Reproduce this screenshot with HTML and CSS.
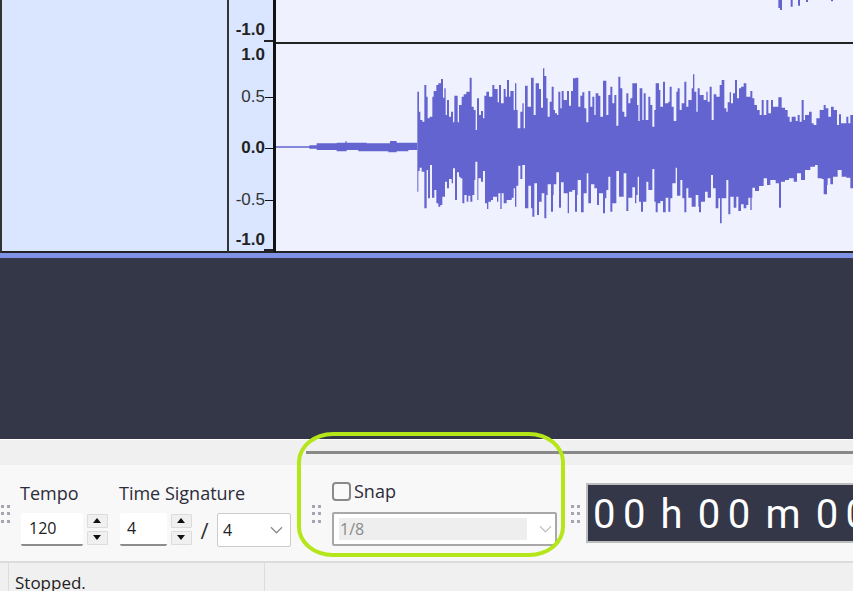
FILE: index.html
```html
<!DOCTYPE html>
<html lang="en">
<head>
  <meta charset="UTF-8" />
  <title>Snap toolbar</title>
  <link rel="stylesheet" href="styles.css">
</head>
<body>
  <div class="tracks">
    <div class="panel"></div>

    <div class="ruler">
      <div class="ruler-top"><span class="scale bold">-1.0</span></div>
      <div class="ruler-scale">
        <span class="scale bold">1.0</span>
        <span class="scale tick">0.5</span>
        <span class="scale bold tick">0.0</span>
        <span class="scale tick">-0.5</span>
        <span class="scale bold">-1.0</span>
      </div>
    </div>

    <div class="lanes">
      <div class="lane-top"></div>
      <div class="lane-bottom"></div>
    </div>

    <!-- waveform, coordinates are 3x screen pixels -->
    <svg class="wave" viewBox="0 0 2559 774">
      <g fill="#6464d0">
        <!-- quiet intro -->
        <path d="M828 439H928V436H950V430H1010V428H1036V424H1040V428H1100V430H1170V423H1190V428H1252V441H828Z" />
        <path d="M828 443H928V446H950V450H1010V454H1040V450H1075V454H1165V457H1190V454H1225V450H1252V441H828Z" />
        <!-- solid core -->
        <path d="M1252 405H2559V465H1252Z" />
        <!-- upper envelope -->
        <path transform="translate(1245 195)" d="M7 210V80H12V140H16V165H22V170H28V60H34V95H38V160H44V155H52V95H56V78H64V60H70V55H78V42H84V98H88V70H92V150H96V105H102V155H108V140H114V172H118V92H128V172H132V120H140V95H146V88H154V80H164V38H170V125H176V135H182V195H186V100H192V150H198V138H204V160H208V92H214V80H222V95H232V60H238V72H248V112H252V60H258V115H266V72H272V95H276V45H282V95H286V78H296V135H300V55H304V135H308V190H316V140H322V115H326V190H330V62H338V125H348V38H356V150H362V55H372V72H378V128H384V10H388V33H394V100H398V155H404V110H410V65H416V135H420V145H426V150H430V80H436V130H440V78H446V105H456V78H462V122H468V78H474V40H482V38H490V125H496V92H502V82H508V130H514V172H520V78H526V125H532V95H538V150H542V85H550V92H556V155H564V47H574V150H580V90H586V65H592V115H598V90H604V182H610V35H616V70H622V140H628V155H634V85H640V115H646V100H652V55H660V210Z" />
        <path transform="translate(1905 195)" d="M0 210V55H6V120H10V168H14V70H22V165H26V85H32V165H40V95H46V120H52V185H58V135H62V55H72V75H76V125H84V50H90V115H100V110H104V65H110V125H116V168H124V80H128V70H134V135H140V115H148V50H154V125H160V105H170V70H174V28H178V80H184V140H188V70H194V90H206V105H214V80H218V110H224V65H230V165H236V88H244V95H254V60H260V45H268V130H274V140H278V112H284V82H288V115H294V85H300V45H306V100H312V70H318V65H326V55H334V95H346V78H352V100H358V120H366V135H374V150H380V105H386V150H394V105H400V145H408V105H414V125H430V97H440V128H450V135H458V155H464V170H470V155H482V168H488V150H494V170H500V105H506V165H510V150H522V140H530V175H536V180H544V160H554V135H566V120H572V130H580V155H588V125H596V135H606V180H612V148H618V175H634V155H640V175H646V150H654V210Z" />
        <!-- lower envelope -->
        <path transform="translate(1245 465)" d="M7 0V110H10V48H14V38H20V50H28V160H35V45H39V130H45V30H51V128H58V105H64V145H70V155H76V150H82V125H90V80H96V100H102V72H110V85H114V40H120V135H126V52H132V65H136V70H142V145H148V120H155V140H160V122H166V140H172V120H178V75H181V20H187V135H190V70H198V80H204V48H210V145H216V162H220V140H228V135H234V125H246V140H250V115H256V162H260V115H266V145H275V135H290V128H296V100H300V155H304V92H310V32H316V72H322V30H330V160H340V92H348V160H352V185H358V85H366V180H372V140H380V115H388V190H394V120H398V88H408V170H414V120H416V88H424V52H432V158H438V82H446V115H458V175H462V110H472V105H480V170H486V120H488V75H498V172H506V115H515V55H520V145H528V88H538V100H546V150H552V115H564V175H570V130H574V105H580V65H586V170H592V145H604V48H612V125H626V55H634V168H640V128H652V97H660V0Z" />
        <path transform="translate(1905 465)" d="M0 0V145H4V120H8V65H12V140H18V170H24V140H34V80H40V105H52V42H58V140H62V172H68V145H76V138H84V172H92V128H100V170H106V130H112V85H122V38H126V122H136V75H142V130H148V172H154V100H160V128H170V155H182V120H190V155H192V172H198V140H210V110H218V128H228V60H234V100H242V160H250V130H255V205H260V130H274V75H280V178H286V125H296V158H304V125H310V168H318V148H326V160H334V150H340V128H346V165H350V128H352V98H360V108H372V93H386V70H396V90H406V75H422V85H432V158H438V80H450V75H462V70H476V80H486V55H498V75H510V45H526V35H540V30H548V70H560V72H566V118H576V90H578V70H586V88H594V65H608V45H620V65H634V68H646V100H654V0Z" />
        <!-- end of the clip in the track above -->
        <path transform="translate(1290)" d="M1045 0V24H1050V30H1056V0ZM1082 0V20H1088V0ZM1104 0V17H1110V0ZM1128 0V6H1134V0ZM1203 0V4H1209V0Z" />
      </g>
    </svg>
  </div>

  <div class="workspace"></div>

  <div class="rail"><div class="rail-line"></div></div>

  <div class="toolbar">
    <svg class="grip grip-first" viewBox="0 0 10 18"><path d="M1 0h3v3H1zM7 0h3v3H7zM1 7h3v3H1zM7 7h3v3H7zM1 15h3v3H1zM7 15h3v3H7z" /></svg>

    <div class="group group-tempo">
      <div class="label">Tempo</div>
      <div class="controls">
        <div class="input input-tempo">120</div>
        <div class="spin"><button class="up"></button><button class="down"></button></div>
      </div>
    </div>

    <div class="group group-sig">
      <div class="label">Time Signature</div>
      <div class="controls">
        <div class="input input-sig">4</div>
        <div class="spin"><button class="up"></button><button class="down"></button></div>
        <span class="slash">/</span>
        <div class="select select-sig">
          <span>4</span>
          <svg class="chevron" viewBox="0 0 14 8"><path d="M1 1l6 6 6-6" /></svg>
        </div>
      </div>
    </div>

    <svg class="grip grip-snap" viewBox="0 0 10 18"><path d="M1 0h3v3H1zM7 0h3v3H7zM1 7h3v3H1zM7 7h3v3H7zM1 15h3v3H1zM7 15h3v3H7z" /></svg>

    <div class="group group-snap">
      <div class="snap-row"><span class="checkbox"></span><span class="label">Snap</span></div>
      <div class="select select-snap">
        <span class="snap-value">1/8</span>
        <svg class="chevron chevron-off" viewBox="0 0 14 8"><path d="M1 1l6 6 6-6" /></svg>
      </div>
    </div>

    <svg class="grip grip-time" viewBox="0 0 10 18"><path d="M1 0h3v3H1zM7 0h3v3H7zM1 7h3v3H1zM7 7h3v3H7zM1 15h3v3H1zM7 15h3v3H7z" /></svg>

    <div class="timer">00 h 00 m 00</div>
  </div>

  <div class="status">
    <div class="status-cell">Stopped.</div>
  </div>

  <div class="highlight"></div>
</body>
</html>
```

FILE: styles.css
```css
html, body {
  margin: 0;
  height: 591px;
  overflow: hidden;
}

body {
  position: relative;
  font-family: "Open Sans", "Noto Sans", Arial, sans-serif;
  font-size: 16px;
  color: #222;
  background: #f0f0f0;
}

/* tracks */

.tracks {
  position: relative;
  display: flex;
  height: 253px;
  border-bottom: 5px solid #8092e6;
  background: #eff1ff;
}

.panel {
  width: 227px;
  box-sizing: border-box;
  background: #dae6ff;
  border-left: 2px solid #333;
  border-bottom: 2px solid #222;
}

.ruler {
  display: flex;
  flex-direction: column;
  width: 49px;
  box-sizing: border-box;
  background: #dae6ff;
  border-left: 2px solid #333;
  border-right: 3px solid #111;
  border-bottom: 2px solid #222;
  font-family: "Liberation Sans", Arial, sans-serif;
}

.ruler-top {
  position: relative;
  height: 44px;
  flex: none;
  display: flex;
  align-items: flex-end;
  justify-content: flex-end;
  padding-bottom: 4px;
  box-sizing: border-box;
}

.ruler-scale {
  position: relative;
  flex: 1;
  display: grid;
  grid-template-rows: 22px 62px 40px 64px 16px;
}

/* end ticks of each scale */
.ruler-top::after,
.ruler-scale::after {
  content: "";
  position: absolute;
  right: 0;
  width: 9px;
  height: 2px;
  background: #222;
}

.ruler-top::after {
  bottom: 2px;
}

.ruler-scale::after {
  bottom: 0;
}

.scale {
  position: relative;
  display: flex;
  align-items: center;
  justify-content: flex-end;
  padding-right: 8px;
  font-size: 17px;
  line-height: 16px;
  color: #333;
}

.ruler-top .scale {
  height: 20px;
}

.bold {
  font-weight: bold;
  color: #222;
}

.tick::after {
  content: "";
  position: absolute;
  right: 0;
  top: 50%;
  width: 8px;
  height: 1px;
  background: #111;
}

.lanes {
  flex: 1;
  display: flex;
  flex-direction: column;
}

.lane-top {
  height: 44px;
  flex: none;
  box-sizing: border-box;
  border-bottom: 2px solid #222;
}

.lane-bottom {
  flex: 1;
  border-bottom: 2px solid #222;
}

.wave {
  position: absolute;
  left: 0;
  top: 0;
  width: 853px;
  height: 258px;
}

.workspace {
  height: 181px;
  background: #333748;
}

/* toolbar */

.rail {
  height: 26px;
  box-sizing: border-box;
  padding: 11px 0 0 306px;
  border-top: 1px solid #fff;
}

.rail-line {
  height: 3px;
  background: #888;
}

.toolbar {
  display: flex;
  align-items: center;
  height: 98px;
  box-sizing: border-box;
  background: #f8f8f8;
  border-bottom: 2px solid #dcdcdc;
  overflow: hidden;
}

.grip {
  width: 10px;
  height: 18px;
  flex: none;
  fill: #a6a6b0;
  margin-top: 1px;
}

.grip-snap {
  margin-left: 19px;
  width: 12px;
}

.grip-time {
  margin-left: 13px;
}

.group {
  flex: none;
  display: flex;
  flex-direction: column;
}

.group-tempo {
  margin-left: 10px;
  width: 88px;
}

.group-sig {
  margin-left: 11px;
  width: 172px;
}

.group-snap {
  margin-left: 10px;
  width: 225px;
}

.label {
  font-size: 18px;
  line-height: 26px;
  margin-bottom: 7px;
  color: #2c2c3a;
  white-space: nowrap;
}

.controls {
  display: flex;
  align-items: center;
}

.input {
  height: 33px;
  box-sizing: border-box;
  background: #fff;
  border-bottom: 2px solid #8c8c8c;
  border-radius: 2px;
  line-height: 31px;
}

.input-tempo {
  width: 62px;
  padding-left: 8px;
  margin-left: 1px;
}

.input-sig {
  width: 47px;
  padding-left: 7px;
  margin-left: 1px;
}

.spin {
  display: flex;
  flex-direction: column;
  gap: 3px;
  margin-left: 4px;
}

.spin button {
  position: relative;
  display: block;
  width: 21px;
  height: 14px;
  padding: 0;
  background: #f0f0f0;
  border: 1px solid #dcdcdc;
  border-radius: 1px;
}

.spin button::before {
  content: "";
  position: absolute;
  left: 5px;
  top: 3px;
  border-left: 4px solid transparent;
  border-right: 4px solid transparent;
}

.spin .up::before {
  border-bottom: 5px solid #111;
}

.spin .down::before {
  border-top: 5px solid #111;
}

.slash {
  width: 25px;
  text-align: center;
  font-size: 22px;
  color: #333;
}

.select {
  display: flex;
  align-items: center;
  justify-content: space-between;
  height: 34px;
  box-sizing: border-box;
  background: #fff;
  border-radius: 2px;
}

.select-sig {
  width: 74px;
  padding: 0 6px 0 5px;
  border: 1px solid #ccc;
}

.select-snap {
  width: 225px;
  padding: 0 2px 0 5px;
  border: 2px solid #a8a8a8;
}

.snap-row {
  display: flex;
  align-items: center;
  gap: 3px;
  height: 22px;
  margin-bottom: 10px;
}

.snap-row .label {
  margin-bottom: 0;
}

.checkbox {
  width: 19px;
  height: 19px;
  box-sizing: border-box;
  border: 2px solid #8a8a8a;
  border-radius: 4px;
  background: #fafafa;
}

.snap-value {
  width: 188px;
  height: 22px;
  line-height: 22px;
  padding-left: 1px;
  box-sizing: border-box;
  background: #eee;
  color: #8a8a8a;
}

.chevron {
  width: 13px;
  height: 8px;
  margin-right: 1px;
  fill: none;
  stroke: #8a8a8a;
  stroke-width: 1.3;
}

.chevron-off {
  stroke: #c4c4c4;
}

.timer {
  flex: none;
  margin-left: 6px;
  height: 60px;
  width: 267px;
  box-sizing: border-box;
  padding-left: 5px;
  background: #333748;
  border: 2px solid #bdbdbd;
  border-right: 0;
  font-family: Roboto, sans-serif;
  font-size: 40px;
  line-height: 60px;
  letter-spacing: 7.4px;
  word-spacing: -9.5px;
  color: #fff;
  white-space: nowrap;
  overflow: hidden;
}

/* status bar */

.status {
  height: 28px;
  padding-left: 8px;
  font-size: 17px;
}

.status-cell {
  width: 257px;
  height: 100%;
  box-sizing: border-box;
  padding-left: 6px;
  border-left: 1px solid #dcdcdc;
  border-right: 1px solid #dcdcdc;
  line-height: 39px;
  overflow: hidden;
}

/* annotation drawn over the screenshot */

.highlight {
  position: absolute;
  left: 297px;
  top: 432px;
  width: 268px;
  height: 125px;
  box-sizing: border-box;
  border: 4px solid #b4e61a;
  border-radius: 36px / 30px;
}
```
